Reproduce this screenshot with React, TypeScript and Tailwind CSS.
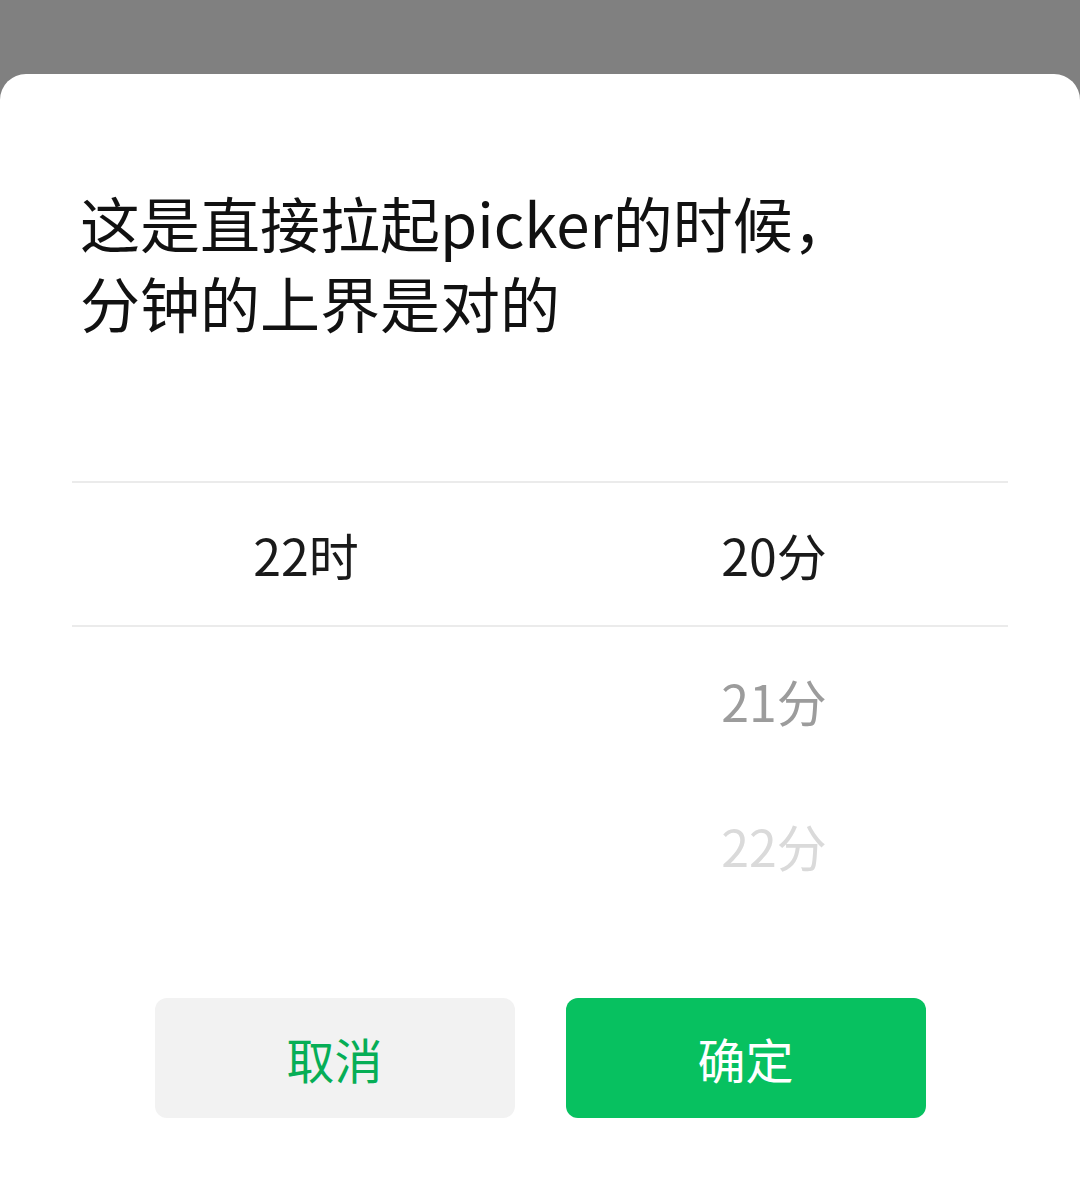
import React from "react";

const font = { fontFamily: '"Noto Sans CJK SC", "Noto Sans", sans-serif' };

interface Row {
  hour?: string;
  minute: string;
  tone: string;
}

const rows: Row[] = [
  { hour: "22时", minute: "20分", tone: "text-[#1a1a1a]" },
  { minute: "21分", tone: "text-[#9c9c9c]" },
  { minute: "22分", tone: "text-[#dadada]" },
];

export default function App() {
  return (
    <div className="min-h-screen bg-[#808080] pt-[74px]" style={font}>
      {/* Bottom sheet */}
      <div className="flex h-[1105px] flex-col rounded-t-[26px] bg-white">
        <h1 className="px-[80px] pt-[108px] text-[60px] leading-[80px] font-normal text-[#111111]">
          这是直接拉起picker的时候，
          <br />
          分钟的上界是对的
        </h1>

        {/* Picker */}
        <div className="mx-[72px] mt-[139px]">
          {rows.map((row, idx) => (
            <div
              key={idx}
              className={
                idx === 0
                  ? "grid h-[146px] grid-cols-2 items-center border-y-2 border-[#ebebeb]"
                  : "grid h-[145px] grid-cols-2 items-center"
              }
            >
              <span className="text-center text-[50px] leading-none text-[#1a1a1a]">{row.hour}</span>
              <span className={`text-center text-[50px] leading-none ${row.tone}`}>{row.minute}</span>
            </div>
          ))}
        </div>

        {/* Actions */}
        <div className="mt-[81px] flex justify-center gap-[51px]">
          <button className="h-[120px] w-[360px] rounded-[12px] bg-[#f2f2f2] text-[48px] font-normal text-[#06ae56]">
            取消
          </button>
          <button className="h-[120px] w-[360px] rounded-[12px] bg-[#07c160] text-[48px] font-normal text-white">
            确定
          </button>
        </div>
      </div>
    </div>
  );
}
